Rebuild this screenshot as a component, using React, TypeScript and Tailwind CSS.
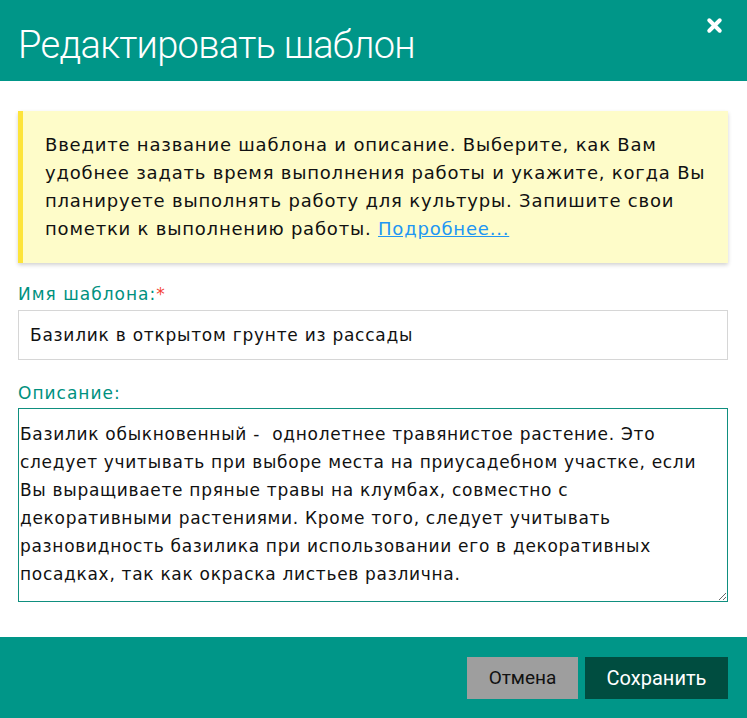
import { X } from "lucide-react";

const description =
  "Базилик обыкновенный -  однолетнее травянистое растение. Это\nследует учитывать при выборе места на приусадебном участке, если\nВы выращиваете пряные травы на клумбах, совместно с\nдекоративными растениями. Кроме того, следует учитывать\nразновидность базилика при использовании его в декоративных\nпосадках, так как окраска листьев различна.";

export default function App() {
  return (
    <div className="w-[747px] h-[718px] bg-white flex flex-col font-['DejaVu_Sans',sans-serif] text-[17px]">
      {/* header */}
      <div className="h-[81px] bg-[#009688] flex items-start justify-between pl-[18px] pr-[22px]">
        <h1 className="mt-[21px] text-white text-[38px] leading-[48px] font-light font-['Roboto',sans-serif] tracking-[-0.7px]">
          Редактировать шаблон
        </h1>
        <button className="mt-[15px] text-white">
          <X size={21} strokeWidth={4.5} />
        </button>
      </div>

      {/* body */}
      <div className="flex-1 px-[18px] pt-[30px] pr-[19px]">
        <div className="bg-[#fefcc9] border-l-[5px] border-[#fde43a] pl-[22px] pr-[8px] py-[20px] text-[18px] tracking-[0.8px] leading-[28px] text-[#111] shadow-[0_2px_4px_rgba(0,0,0,0.18)]">
          Введите название шаблона и описание. Выберите, как Вам
          <br />
          удобнее задать время выполнения работы и укажите, когда Вы планируете
          выполнять работу для культуры. Запишите свои пометки к выполнению работы.{" "}
          <a href="#" className="text-[#2196f3] underline">
            Подробнее...
          </a>
        </div>

        <div className="mt-[20px] leading-[22px] tracking-[1px] text-[#00917f]">
          Имя шаблона:<span className="text-[#f44336]">*</span>
        </div>
        <input
          className="mt-[5px] w-full h-[50px] border border-[#d6d6d6] px-[11px] text-[#111] outline-none font-['DejaVu_Sans',sans-serif] text-[17px] tracking-[0.75px]"
          defaultValue="Базилик в открытом грунте из рассады"
        />

        <div className="mt-[22px] leading-[22px] tracking-[1px] text-[#00917f]">Описание:</div>
        <textarea
          className="mt-[4px] w-full h-[194px] border border-[#0f8f7f] pl-[1px] pr-[4px] pt-[11px] leading-[28px] text-[#111] outline-none font-['DejaVu_Sans',sans-serif] text-[17px] tracking-[0.7px] block"
          defaultValue={description}
        />
      </div>

      {/* footer */}
      <div className="h-[81px] bg-[#009688] flex items-start justify-end gap-[7px] pt-[20px] pr-[19px]">
        <button className="w-[111px] h-[42px] bg-[#9e9e9e] text-[#111] text-[19px] font-['Roboto',sans-serif]">
          Отмена
        </button>
        <button className="w-[143px] h-[42px] bg-[#004d40] text-white text-[20px] font-['Roboto',sans-serif]">
          Сохранить
        </button>
      </div>
    </div>
  );
}
